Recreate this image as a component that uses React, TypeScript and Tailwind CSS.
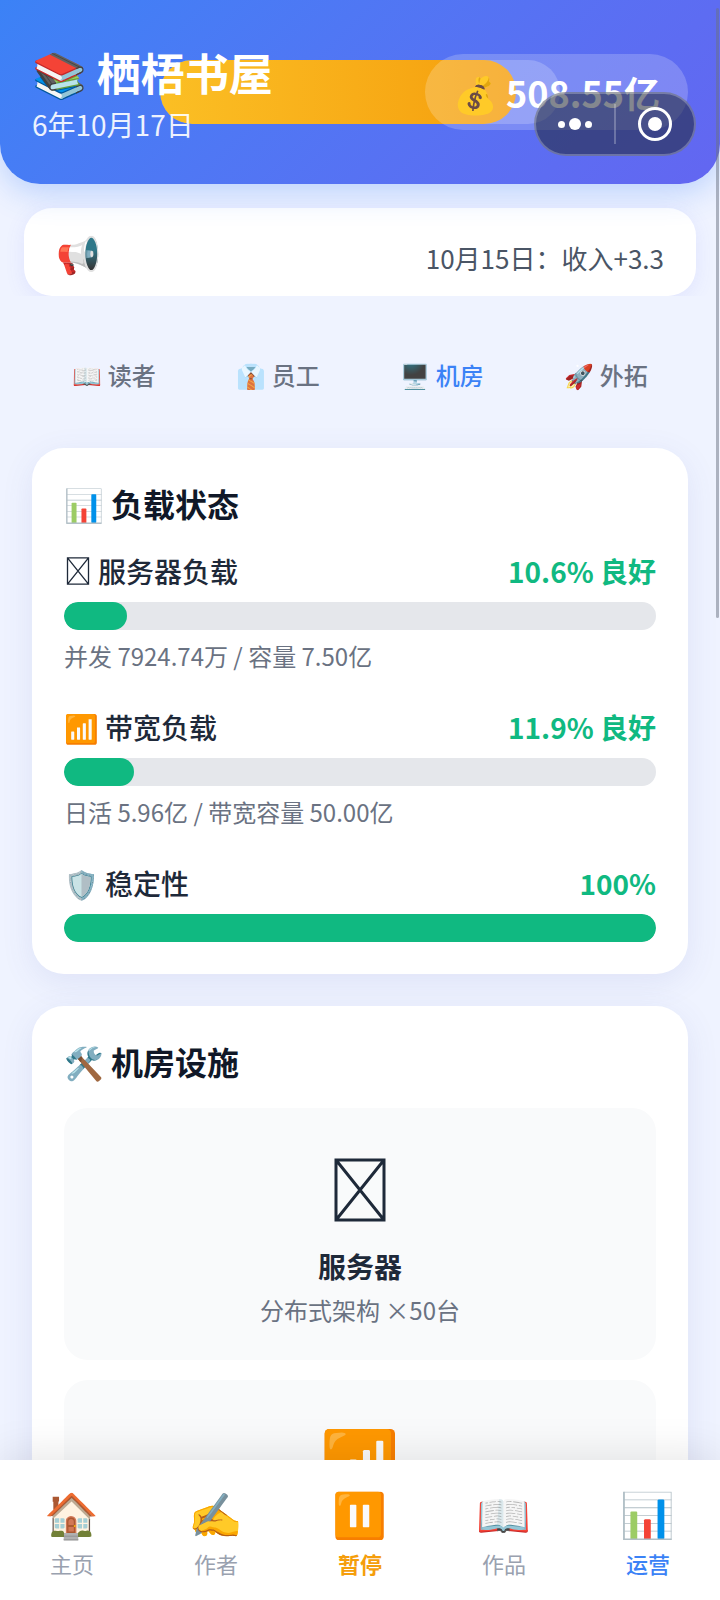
import { useState } from "react";

interface LoadItem {
  icon: string | null;
  name: string;
  value: string;
  percent: number;
  detail?: string;
}

interface Facility {
  id: string;
  icon: string | null;
  name?: string;
  detail?: string;
}

const tabs = [
  { icon: "📖", label: "读者" },
  { icon: "👔", label: "员工" },
  { icon: "🖥️", label: "机房" },
  { icon: "🚀", label: "外拓" },
];

const loads: LoadItem[] = [
  { icon: null, name: "服务器负载", value: "10.6% 良好", percent: 10.6, detail: "并发 7924.74万 / 容量 7.50亿" },
  { icon: "📶", name: "带宽负载", value: "11.9% 良好", percent: 11.9, detail: "日活 5.96亿 / 带宽容量 50.00亿" },
  { icon: "🛡️", name: "稳定性", value: "100%", percent: 100 },
];

const facilities: Facility[] = [
  { id: "server", icon: null, name: "服务器", detail: "分布式架构 ×50台" },
  { id: "bandwidth", icon: "📶" },
];

const navItems = [
  { icon: "🏠", label: "主页", color: "text-gray-400" },
  { icon: "✍️", label: "作者", color: "text-gray-400" },
  { icon: "⏸️", label: "暂停", color: "font-bold text-[#f59e0b]" },
  { icon: "📖", label: "作品", color: "text-gray-400" },
  { icon: "📊", label: "运营", color: "font-medium text-[#3b82f6]" },
];

// Crossed box, shown where an item has no emoji
function MissingIcon({ className, stroke }: { className: string; stroke: number }) {
  return (
    <svg className={className} viewBox="0 0 52 64" fill="none" stroke="currentColor" strokeWidth={stroke} aria-hidden="true">
      <path d="M2 2H50V62H2ZM2 2L50 62M50 2L2 62" />
    </svg>
  );
}

function Header() {
  return (
    <header className="relative flex h-[184px] shrink-0 items-start justify-between rounded-b-[40px] bg-linear-135 from-[#3b82f6] to-[#6366f1] px-8 pt-[54px] text-white shadow-[0_8px_32px_rgba(59,130,246,0.3)]">
      {/* Progress */}
      <div className="absolute top-[60px] left-[160px] h-16 w-[400px] overflow-hidden rounded-full bg-white/20">
        <div className="h-full w-[89%] rounded-full bg-linear-to-r from-[#fbbf24] to-[#f59e0b]" />
      </div>

      <div className="relative">
        <h1 className="text-[44px] leading-[36px] font-bold whitespace-nowrap">📚 栖梧书屋</h1>
        <p className="mt-3.5 text-[28px] leading-[40px] opacity-90">6年10月17日</p>
      </div>
      <div className="relative rounded-full bg-white/20 px-7 py-3 text-[36px] leading-[52px] font-bold whitespace-nowrap">
        💰 508.55亿
      </div>

      {/* Capsule menu over the header */}
      <div className="absolute top-[92px] right-6 flex h-16 w-[162px] items-center rounded-full border-2 border-white/25 bg-[#1d2433]/55">
        <button type="button" aria-label="更多" className="flex flex-1 items-center justify-center gap-1">
          <span className="size-[7px] rounded-full bg-white" />
          <span className="size-3 rounded-full bg-white" />
          <span className="size-[7px] rounded-full bg-white" />
        </button>
        <span className="h-10 w-0.5 bg-white/25" />
        <button type="button" aria-label="关闭" className="flex flex-1 items-center justify-center">
          <span className="flex size-[34px] items-center justify-center rounded-full border-[3px] border-white">
            <span className="size-3.5 rounded-full bg-white" />
          </span>
        </button>
      </div>
    </header>
  );
}

function LoadRow({ item }: { item: LoadItem }) {
  return (
    <div>
      <div className="mb-2.5 flex items-center justify-between text-[28px] leading-[42px]">
        <span className="flex items-center gap-1.5 font-medium text-gray-800">
          {item.icon ? <span>{item.icon}</span> : <MissingIcon className="mx-0.5 h-7 w-6" stroke={3} />}
          {item.name}
        </span>
        <span className="font-bold text-[#10b981]">{item.value}</span>
      </div>
      <div className="h-7 overflow-hidden rounded-full bg-gray-200">
        <div className="h-full rounded-full bg-[#10b981]" style={{ width: `${item.percent}%` }} />
      </div>
      {item.detail && <p className="mt-2 text-[24px] leading-[36px] text-gray-500">{item.detail}</p>}
    </div>
  );
}

export default function App() {
  const [tab, setTab] = useState("机房");

  return (
    <div className="relative flex h-screen flex-col overflow-hidden bg-[#eff3ff] font-['Noto_Sans_CJK_SC','Noto_Color_Emoji',sans-serif]">
      <Header />

      <div className="shrink-0 overflow-hidden px-6 pt-6">
        <div className="flex h-[88px] items-center justify-between rounded-[28px] bg-white px-8 shadow-[0_4px_20px_rgba(99,102,241,0.1)]">
          <span className="text-[36px] leading-[48px]">📢</span>
          <p className="pt-3 text-[26px] leading-[36px] text-gray-600">10月15日：收入+3.3</p>
        </div>
      </div>

      <div className="mx-8 mt-[47px] mb-[9px] grid shrink-0 grid-cols-4">
        {tabs.map((t) => (
          <button
            key={t.label}
            type="button"
            onClick={() => setTab(t.label)}
            className={`h-16 text-[24px] leading-[36px] font-medium ${t.label === tab ? "text-[#3b82f6]" : "text-gray-500"}`}
          >
            {t.icon} {t.label}
          </button>
        ))}
      </div>

      <main className="min-h-0 flex-1 space-y-8 overflow-y-auto px-8 pt-8 pb-8 [scrollbar-width:none]">
        <section className="rounded-[32px] bg-white p-8 shadow-[0_8px_32px_rgba(80,90,180,0.1)]">
          <h2 className="mb-6 text-[32px] leading-[46px] font-bold text-gray-900">📊 负载状态</h2>
          <div className="space-y-8">
            {loads.map((item) => (
              <LoadRow key={item.name} item={item} />
            ))}
          </div>
        </section>

        <section className="rounded-[32px] bg-white p-8 shadow-[0_8px_32px_rgba(80,90,180,0.1)]">
          <h2 className="mb-6 text-[32px] leading-[46px] font-bold text-gray-900">🛠️ 机房设施</h2>
          <div className="space-y-5">
            {facilities.map((f) => (
              <div key={f.id} className="flex h-[252px] flex-col items-center rounded-[24px] bg-[#f9fafb] pt-8">
                <div className="text-[64px] leading-[92px] text-gray-800">
                  {f.icon ?? <MissingIcon className="my-[18px] h-16 w-[52px]" stroke={3} />}
                </div>
                {f.name && <h3 className="mt-1 text-[28px] leading-[44px] font-bold text-gray-800">{f.name}</h3>}
                {f.detail && <p className="mt-1 text-[24px] leading-[36px] text-gray-500">{f.detail}</p>}
              </div>
            ))}
          </div>
        </section>
      </main>

      <nav className="relative grid h-[140px] shrink-0 grid-cols-5 bg-white shadow-[0_-4px_40px_rgba(0,0,0,0.1)]">
        {navItems.map((n) => (
          <button key={n.label} type="button" className={`flex flex-col items-center pt-6 text-[22px] leading-[32px] ${n.color}`}>
            <span className="mb-[7px] text-[44px] leading-[56px]">{n.icon}</span>
            {n.label}
          </button>
        ))}
      </nav>

      {/* Scroll indicator */}
      <div className="absolute top-2 right-px h-[610px] w-[3px] rounded-full bg-gray-500/50" />
    </div>
  );
}
